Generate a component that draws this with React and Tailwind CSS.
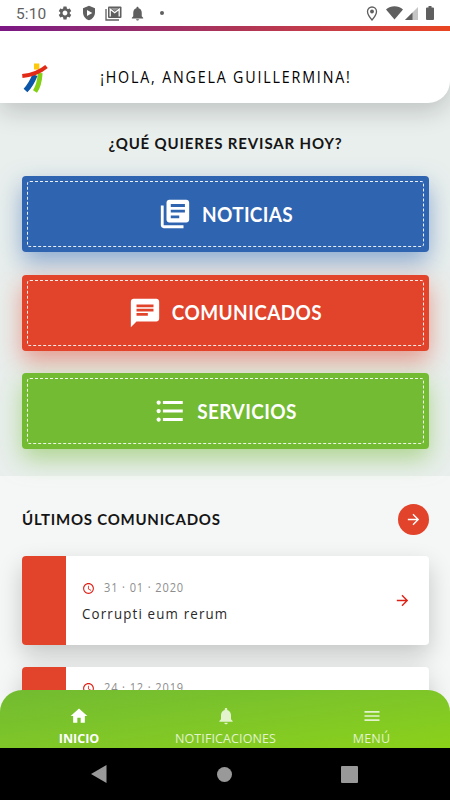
import React from 'react';
import {
  MdSettings,
  MdNotifications,
  MdLibraryBooks,
  MdChat,
  MdFormatListBulleted,
  MdArrowForward,
  MdAccessTime,
  MdHome,
  MdMenu,
} from 'react-icons/md';

function StatusBar() {
  return (
    <div className="flex h-[26px] shrink-0 items-center bg-white pl-4 pr-[15px] text-[#5f5f5f]">
      <span className="w-[41px] pt-[4px] font-[Roboto] text-[15.5px] leading-none tracking-[0.1px]">5:10</span>
      <MdSettings className="size-[16px]" />
      <svg className="ml-[8px] size-[16px]" viewBox="0 0 24 24" fill="currentColor">
        <path fillRule="evenodd" d="M12 1 3 5v6c0 5.6 3.8 10.700 9 12 5.200-1.300 9-6.400 9-12V5zM9 7.500v9l8-4.500z" />
      </svg>
      <svg className="ml-[8px] h-[15px] w-[17px]" viewBox="0 0 17 15">
        <path d="M1 3v11h13" fill="none" stroke="currentColor" strokeWidth="1.300" />
        <rect x="3" y="0.500" width="13.500" height="11.500" rx="1" fill="currentColor" />
        <path d="M5.200 10.500V3.200l4.500 3.500 4.500-3.500v7.300" fill="none" stroke="white" strokeWidth="1.300" />
        <path d="M5.500 2h8.400L9.700 5z" fill="white" fillOpacity="0.35" />
      </svg>
      <MdNotifications className="ml-[7px] size-[17px]" />
      <span className="ml-[14px] size-1 rounded-full bg-current" />
      <span className="flex-1" />
      <svg className="h-[15px] w-[12px]" viewBox="0 0 12 15">
        <path d="M6 1a4.500 4.500 0 0 0-4.500 4.500C1.500 8.800 6 14 6 14s4.500-5.200 4.500-8.500A4.500 4.500 0 0 0 6 1z" fill="none" stroke="currentColor" strokeWidth="1.300" />
        <circle cx="6" cy="5.500" r="1.900" fill="currentColor" />
      </svg>
      <svg className="ml-[8px] h-[14px] w-[17px]" viewBox="0 0 17 14" fill="currentColor">
        <path d="M0 3.500C5-.8 12-.8 17 3.500L8.500 13.500z" />
      </svg>
      <svg className="ml-[2px] mr-px size-[13px]" viewBox="0 0 13 13">
        <path d="M0 13 13 0v13z" fill="#c5c5c5" />
        <path d="M0 13 7.500 5.500V13z" fill="currentColor" />
      </svg>
      <svg className="ml-[7px] mr-px h-[14px] w-[8px]" viewBox="0 0 8 14" fill="currentColor">
        <path d="M2.500 0h3v1.500H7q1 0 1 1V13q0 1-1 1H1q-1 0-1-1V2.500q0-1 1-1h1.500z" />
      </svg>
    </div>
  );
}

function Logo() {
  return (
    <svg className="h-[30px] w-[26px]" viewBox="0 0 26 30">
      <rect x="12" y="0.500" width="5.300" height="6" fill="#ffc90b" />
      <path d="M18.200 10Q17.500 22 13 28.500" fill="none" stroke="#82cf13" strokeWidth="4.800" />
      <path d="M13 12Q9 22 3.500 27.500" fill="none" stroke="#0b56a8" strokeWidth="5.300" />
      <path d="M0.300 13Q15 11.500 24.500 3.500" fill="none" stroke="#e22b17" strokeWidth="4" />
    </svg>
  );
}

function MainButton({ icon: Icon, label, color, textClass }) {
  return (
    <button className={`relative z-10 flex h-[76px] w-full rounded-[4px] p-[5px] ${color}`}>
      <span className="flex h-full w-full items-center justify-center rounded-[3px] border border-dashed border-white/90">
        <Icon className="size-[34px] shrink-0 text-white" />
        <span className={`ml-[10px] origin-center whitespace-nowrap font-[Lato] text-[19px] font-bold leading-none text-white scale-y-[1.06] ${textClass}`}>{label}</span>
      </span>
    </button>
  );
}

function NewsCard({ date, title, bodyClass }) {
  return (
    <article className="flex h-[89px] shrink-0 overflow-hidden rounded-[4px] bg-white shadow-[0_10px_24px_rgba(0,0,0,0.2)]">
      <div className="w-[44px] shrink-0 bg-[#e2432b]" />
      <div className={`flex flex-1 flex-col pl-[16px] ${bodyClass}`}>
        <div className="flex h-[16px] items-center">
          <MdAccessTime className="size-[13px] text-[#df2016]" />
          <span className="ml-[9px] origin-left scale-x-[0.92] whitespace-nowrap font-['Open_Sans'] text-[12px] leading-none tracking-[0.95px] text-[#8e8e8e]">{date}</span>
        </div>
        {title && (
          <p className="mt-[9px] origin-left scale-x-[0.92] whitespace-nowrap font-['Open_Sans'] text-[14.5px] leading-[18px] tracking-[1.25px] text-[#292929]">{title}</p>
        )}
      </div>
      <div className="flex items-center pr-[18px]">
        {title && <MdArrowForward className="size-[17px] text-[#df2016]" />}
      </div>
    </article>
  );
}

function Tab({ icon: Icon, label, className, textClass }) {
  return (
    <div className={`flex flex-col items-center pt-[16px] ${className}`}>
      <Icon className="size-[20px]" />
      <span className={`mt-[6px] whitespace-nowrap leading-[14px] ${textClass}`}>{label}</span>
    </div>
  );
}

export default function App() {
  return (
    <div className="flex h-[800px] w-[450px] flex-col overflow-hidden bg-[#e9efed] font-['Open_Sans',sans-serif]">
      <StatusBar />
      <div className="h-[5px] shrink-0 bg-gradient-to-r from-[#7b1684] via-[#ac3458] to-[#e9451f]" />
      <main className="flex h-[717px] shrink-0 flex-col overflow-hidden">
        <header className="relative z-20 grid h-[72px] shrink-0 grid-cols-[78px_1fr_78px] items-center rounded-br-[22px] bg-white pt-[21px] shadow-[0_8px_26px_rgba(0,0,0,0.19)]">
          <div className="pl-[22px]"><Logo /></div>
          <h1 className="flex justify-center whitespace-nowrap pl-[2px] font-['Open_Sans'] text-[15.5px] font-normal leading-none tracking-[1.98px] text-black scale-x-[0.92]">¡HOLA, ANGELA GUILLERMINA!</h1>
        </header>
        <section className="h-[373px] shrink-0 pl-[22px] pr-[21px]">
          <h2 className="flex h-[73px] items-center justify-center pt-[7px] font-[Lato] text-[15px] font-bold leading-none tracking-[0.85px] text-[#151515] whitespace-nowrap">¿QUÉ QUIERES REVISAR HOY?</h2>
          <div className="flex flex-col gap-[22.500px]">
            <MainButton icon={MdLibraryBooks} label="NOTICIAS" color="bg-[#2f64b1] shadow-[0_10px_24px_rgba(47,100,177,0.5)]" textClass="tracking-[0.3px]" />
            <MainButton icon={MdChat} label="COMUNICADOS" color="bg-[#e2432b] shadow-[0_10px_24px_rgba(226,67,43,0.5)]" textClass="tracking-[0.4px] mr-px" />
            <MainButton icon={MdFormatListBulleted} label="SERVICIOS" color="bg-[#73bb33] shadow-[0_10px_24px_rgba(115,187,51,0.5)]" textClass="tracking-[0.4px] mr-px" />
          </div>
        </section>
        <section className="h-[272px] shrink-0 bg-[#f5f7f7] pl-[22px] pr-[21px]">
          <div className="flex h-[80px] items-center justify-between pt-[7px]">
            <h2 className="font-[Lato] text-[15px] font-bold leading-none tracking-[0.75px] text-[#151515] whitespace-nowrap">ÚLTIMOS COMUNICADOS</h2>
            <button className="flex size-[31px] items-center justify-center rounded-full bg-[#e2432b]">
              <MdArrowForward className="size-[17px] text-white" />
            </button>
          </div>
          <div className="flex flex-col gap-[22px]">
            <NewsCard date="31 · 01 · 2020" title="Corrupti eum rerum" bodyClass="pt-[24px]" />
            <NewsCard date="24 · 12 · 2019" bodyClass="pt-[13px]" />
          </div>
        </section>
      </main>
      <nav className="relative z-20 -mt-[58px] grid h-[58px] shrink-0 grid-cols-[158px_135px_157px] rounded-t-[22px] bg-gradient-to-br from-[#72bb31] to-[#8bd119]">
        <Tab icon={MdHome} label="INICIO" className="text-white" textClass="text-[12.500px] font-bold" />
        <Tab icon={MdNotifications} label="NOTIFICACIONES" className="text-[#e2f3ce]" textClass="text-[12.500px] tracking-[0.1px]" />
        <Tab icon={MdMenu} label="MENÚ" className="text-[#e2f3ce]" textClass="text-[12.500px] tracking-[0.2px]" />
      </nav>
      <footer className="grid h-[52px] shrink-0 grid-cols-[198px_54px_198px] items-center justify-items-center bg-black">
        <svg className="h-[18px] w-[16px]" viewBox="0 0 16 18"><path d="M15.500 0v18L0 9z" fill="#999" /></svg>
        <span className="-ml-[2px] size-[15px] rounded-full bg-[#999]" />
        <span className="-ml-[4px] size-[17px] rounded-[1px] bg-[#999]" />
      </footer>
    </div>
  );
}
